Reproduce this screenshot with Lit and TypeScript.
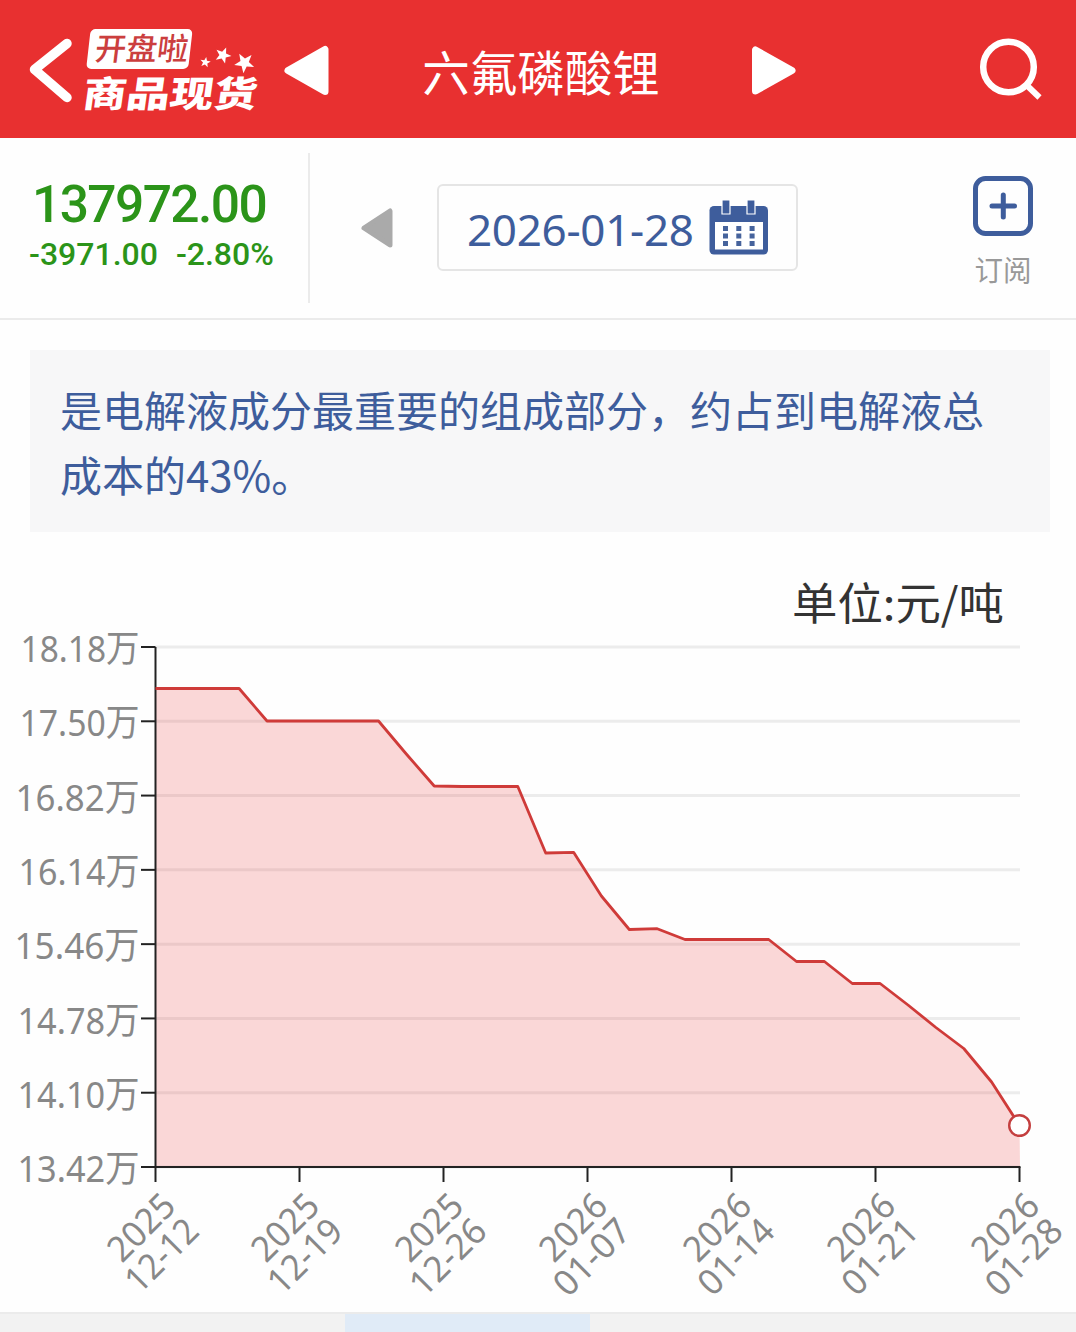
import { LitElement, html, css, svg } from "lit";
import { customElement } from "lit/decorators.js";

const LEFT = 155.5;
const RIGHT = 1019.5;
const TOP = 67;
const BOTTOM = 587;

// Axis labels with the drawn width of each one.
const yLabels: [string, number][] = [
  ["18.18万", 119],
  ["17.50万", 120],
  ["16.82万", 124],
  ["16.14万", 121],
  ["15.46万", 125],
  ["14.78万", 122],
  ["14.10万", 122],
  ["13.42万", 122],
];

const xLabels: [string, string, number][] = [
  ["2025", "12-12", 87],
  ["2025", "12-19", 89],
  ["2025", "12-26", 92],
  ["2026", "01-07", 92],
  ["2026", "01-14", 91],
  ["2026", "01-21", 91],
  ["2026", "01-28", 92],
];

// Height of every daily close inside the plot.
const closes = [
  108.5, 108.5, 108.5, 108.5, 141, 141, 141, 141, 141, 174, 206, 206.5, 206.5,
  206.5, 273, 272.3, 316, 349.5, 348.7, 359.5, 359.5, 359.5, 359.5, 381.5,
  381.5, 403.5, 403.5, 425, 447.5, 468.5, 502, 545.5,
];

// Outline of a five-pointed star; `turn` is the angle of its first point.
const star = (cx: number, cy: number, r: number, turn: number) =>
  Array.from({ length: 10 }, (_, i) => {
    const a = ((turn + i * 36) * Math.PI) / 180;
    const d = i % 2 ? r * 0.42 : r;
    return `${(cx + d * Math.cos(a)).toFixed(2)},${(cy + d * Math.sin(a)).toFixed(2)}`;
  }).join(" ");

@customElement("price-chart")
export class PriceChart extends LitElement {
  static styles = css`
    :host { display: block; height: 752px; }
    svg { display: block; }
    .axis { stroke: #222; stroke-width: 2; fill: none; }
    .grid { stroke: #ececec; stroke-width: 3; }
    .area { fill: #e83030; fill-opacity: 0.19; }
    .line { fill: none; stroke: #cf3b39; stroke-width: 2.8; stroke-linejoin: round; }
    .dot { fill: #fff; stroke: #c43f3f; stroke-width: 2.4; }
    .label { fill: #888; font: 37px "Noto Sans", "Noto Sans CJK SC", sans-serif; }
    .day { fill: #888; font: 35.5px "Noto Sans", "Noto Sans CJK SC", sans-serif; }
    .unit { fill: #333; font: 44px "Noto Sans CJK SC", sans-serif; }
  `;

  render() {
    const pts = closes.map(
      (y, i) => `${(LEFT + (i * (RIGHT - LEFT)) / (closes.length - 1)).toFixed(1)},${y}`,
    );
    const step = (BOTTOM - TOP) / (yLabels.length - 1);
    return html`<svg width="1076" height="752" viewBox="0 -20 1076 752">
      <text class="unit" x="792" y="40" textLength="212" lengthAdjust="spacingAndGlyphs">单位:元/吨</text>
      ${yLabels.map(([t, w], i) => {
        const y = TOP + i * step;
        return svg`
          <line class="grid" x1=${LEFT} x2=${RIGHT + 0.5} y1=${y} y2=${y}></line>
          <line class="axis" x1="141" x2=${LEFT} y1=${y} y2=${y}></line>
          <text class="label" x=${139.5 - w} y=${y + 15.2} textLength=${w} lengthAdjust="spacingAndGlyphs">${t}</text>`;
      })}
      <polygon class="area" points="${LEFT},${BOTTOM} ${pts.join(" ")} ${RIGHT + 0.5},${BOTTOM}"></polygon>
      <path class="axis" d="M${LEFT} ${TOP}V${BOTTOM}H${RIGHT + 1}"></path>
      ${xLabels.map(([a, b, w], i) => {
        const x = LEFT + i * 144;
        return svg`
          <line class="axis" x1=${x} x2=${x} y1=${BOTTOM} y2=${BOTTOM + 15}></line>
          <g transform="translate(${x} 610) rotate(-45)">
            <text class="day" x="-76" y="28.500" textLength="79" lengthAdjust="spacingAndGlyphs">${a}</text>
            <text class="day" x=${1.5 - w} y="62.800" textLength=${w} lengthAdjust="spacingAndGlyphs">${b}</text>
          </g>`;
      })}
      <polyline class="line" points=${pts.join(" ")}></polyline>
      <circle class="dot" cx=${RIGHT} cy="545.5" r="10.3"></circle>
    </svg>`;
  }
}

@customElement("app-root")
export class AppRoot extends LitElement {
  static styles = css`
    :host {
      display: block;
      width: 1076px;
      height: 1332px;
      overflow: hidden;
      background: #fefefe;
      font-family: "Noto Sans", "Noto Sans CJK SC", sans-serif;
    }
    svg { display: block; flex: none; }
    header {
      display: flex;
      align-items: center;
      height: 138px;
      box-sizing: border-box;
      padding: 0 31px 0 24px;
      background: #e83030;
    }
    .title {
      width: 422px;
      text-align: center;
      color: #fff;
      font: 47.5px/60px "Noto Sans CJK SC", sans-serif;
      padding-top: 3px;
    }
    .search { margin-left: auto; }
    .quote {
      display: flex;
      height: 182px;
      box-sizing: border-box;
      border-bottom: 2px solid #ebebeb;
    }
    .price {
      width: 308px;
      height: 150px;
      margin-top: 15px;
      border-right: 2px solid #ebebeb;
      box-sizing: content-box;
      color: #2b9419;
      font-family: Roboto, sans-serif;
      font-weight: 500;
      white-space: nowrap;
    }
    .last { font-size: 51.5px; line-height: 60px; letter-spacing: -1.6px; padding: 22px 0 0 32px; }
    .delta { display: flex; gap: 18px; font-size: 32px; line-height: 38px; padding: 0 0 0 29px; }
    .prev { margin: 68px 0 0 50px; }
    .date {
      display: flex;
      align-items: center;
      box-sizing: border-box;
      width: 361px;
      height: 87px;
      margin: 46px 0 0 43px;
      border: 2px solid #e5e5e5;
      border-radius: 6px;
      padding-left: 28px;
      color: #3e5d9c;
      font-size: 44px;
      line-height: 60px;
      white-space: nowrap;
    }
    .day { width: 242px; letter-spacing: -0.3px; padding-top: 3px; }
    .sub {
      display: flex;
      flex-direction: column;
      align-items: center;
      width: 62px;
      margin: 37px 0 0 174px;
      color: #999;
      font: 28.5px/40px "Noto Sans CJK SC", sans-serif;
    }
    .sub span { margin-top: 12px; }
    .note {
      box-sizing: border-box;
      width: 1020px;
      height: 182px;
      margin: 30px 0 0 30px;
      padding: 26px 30px;
      background: #f7f7f8;
      color: #3e5d9c;
      font: 42px/65px "Noto Sans CJK SC", sans-serif;
      white-space: nowrap;
    }
    price-chart { margin-top: 28px; }
    .tabs {
      display: flex;
      height: 20px;
      box-sizing: border-box;
      border-top: 2px solid #ebebeb;
      background: #f2f2f2;
    }
    .tab { width: 245px; margin-left: 345px; background: #e0ebf7; }
    .badge { font: 500 31px "Noto Sans CJK SC", sans-serif; fill: #cb3e3e; }
    .brand { font: 900 36px "Noto Sans CJK SC", sans-serif; fill: #fff; }
  `;

  render() {
    return html`
      <header>
        <svg width="306" height="138" viewBox="24 0 306 138">
          <path d="M67 43.500L34.500 69.500L67 97.500" fill="none" stroke="#fff" stroke-width="9.500" stroke-linecap="round" stroke-linejoin="round"></path>
          <rect x="88.500" y="29" width="102" height="40" rx="5" fill="#fff" transform="translate(5.500 0) skewX(-6.500)"></rect>
          <text class="badge" transform="translate(94 60) skewX(-7)" textLength="93" lengthAdjust="spacingAndGlyphs">开盘啦</text>
          <text class="brand" transform="translate(81.500 106.500) skewX(-8)" textLength="174" lengthAdjust="spacingAndGlyphs">商品现货</text>
          <g fill="#fff">
            <polygon points=${star(205.3, 62.3, 5.5, -80)}></polygon>
            <polygon points=${star(223, 55.3, 8.5, -68)}></polygon>
            <polygon points=${star(244.5, 62.8, 10.5, -48)}></polygon>
          </g>
          <path d="M288 70.500L325 49.500V91.500Z" fill="#fff" stroke="#fff" stroke-width="7" stroke-linejoin="round"></path>
        </svg>
        <div class="title">六氟磷酸锂</div>
        <svg width="46" height="138" viewBox="752 0 46 138">
          <path d="M755.500 50V91L792 70.500Z" fill="#fff" stroke="#fff" stroke-width="7" stroke-linejoin="round"></path>
        </svg>
        <svg class="search" width="66" height="138" viewBox="979 0 66 138">
          <circle cx="1008.500" cy="67" r="25.300" fill="none" stroke="#fff" stroke-width="6.500"></circle>
          <path d="M1027 85.500L1039.500 97.500" stroke="#fff" stroke-width="6"></path>
        </svg>
      </header>
      <section class="quote">
        <div class="price">
          <div class="last">137972.00</div>
          <div class="delta"><span>-3971.00</span><span>-2.80%</span></div>
        </div>
        <svg class="prev" width="34" height="44" viewBox="0 0 34 44">
          <path d="M4 22L30 5V39Z" fill="#aaa" stroke="#aaa" stroke-width="5" stroke-linejoin="round"></path>
        </svg>
        <div class="date">
          <span class="day">2026-01-28</span>
          <svg width="60" height="56" viewBox="0 0 60 56">
            <rect x="0.500" y="6" width="58.500" height="48.500" rx="4.500" fill="#3e5d9c"></rect>
            <rect x="6" y="22" width="48" height="27.500" fill="#fff"></rect>
            <path d="M13 0h8v14h-8zM38 0h8v14h-8z" fill="#3e5d9c" stroke="#fff" stroke-width="1.200"></path>
            <path d="M14 28.500h31.600M14 36h31.600M14 43.500h31.600" stroke="#46639c" stroke-width="5" stroke-dasharray="5 8.300"></path>
          </svg>
        </div>
        <div class="sub">
          <svg width="62" height="62" viewBox="0 0 62 62">
            <rect x="3.500" y="3.500" width="55" height="55" rx="10" fill="none" stroke="#3e5d9c" stroke-width="5"></rect>
            <path d="M20 31H42.500M31.300 20V42" stroke="#3e5d9c" stroke-width="5" stroke-linecap="round"></path>
          </svg>
          <span>订阅</span>
        </div>
      </section>
      <div class="note">是电解液成分最重要的组成部分，约占到电解液总<br />成本的43%。</div>
      <price-chart></price-chart>
      <div class="tabs"><div class="tab"></div></div>
    `;
  }
}
